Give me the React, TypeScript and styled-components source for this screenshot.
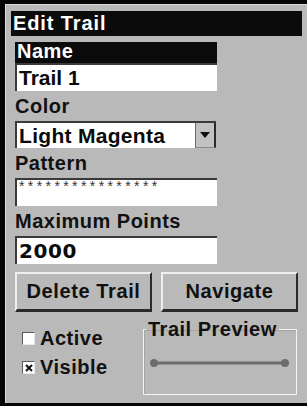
import React from "react";
import styled, { createGlobalStyle } from "styled-components";

const Global = createGlobalStyle`
  html, body { margin: 0; padding: 0; background: #000; }
  body { font-family: "Liberation Sans", Arial, sans-serif; }
`;

const Frame = styled.div`
  width: 307px;
  height: 406px;
  box-sizing: border-box;
  background: #050505;
  padding: 4px 0 3px 5px;
  display: flex;
`;

const Panel = styled.div`
  flex: 1;
  display: flex;
  flex-direction: column;
  background: #b9b9b9;
  border-top: 1px solid #dcdcdc;
  border-left: 1px solid #dcdcdc;
  padding: 6px 5px 0 5px;
  font-family: "Liberation Sans", Arial, sans-serif;
  font-weight: bold;
  font-size: 20px;
  letter-spacing: 0.5px;
  color: #111;
`;

const TitleBar = styled.div`
  height: 25px;
  line-height: 24px;
  background: #0b0b0b;
  color: #fff;
  padding-left: 2px;
  letter-spacing: 0.9px;
`;

const Body = styled.div`
  display: flex;
  flex-direction: column;
  padding: 6px 4px 0 4px;
  flex: 1;
`;

const FieldColumn = styled.div`
  width: 202px;
  display: flex;
  flex-direction: column;
`;

const SectionHeader = styled.div`
  height: 21px;
  line-height: 18px;
  background: #0b0b0b;
  color: #fff;
  padding-left: 2px;
`;

const Label = styled.div`
  height: 30px;
  line-height: 31px;
`;

const TextBox = styled.div<{ $digits?: boolean }>`
  height: 28px;
  box-sizing: border-box;
  background: #fff;
  border-top: 2px solid #3a3a3a;
  border-left: 2px solid #3a3a3a;
  padding-left: 2px;
  line-height: 26px;
  font-size: ${(p) => (p.$digits ? "20px" : "21px")};
  font-family: ${(p) =>
    p.$digits ? '"DejaVu Sans", sans-serif' : '"Liberation Sans", Arial, sans-serif'};
  letter-spacing: ${(p) => (p.$digits ? "0.6px" : "0")};
  color: #0a0a0a;
`;

const PatternBox = styled.div`
  height: 28px;
  box-sizing: border-box;
  background: #fff;
  border-top: 2px solid #3a3a3a;
  border-left: 2px solid #3a3a3a;
  padding-left: 2px;
  font-family: "Liberation Sans", Arial, sans-serif;
  font-weight: normal;
  font-size: 14px;
  line-height: 13px;
  letter-spacing: 3.4px;
  color: #333;
`;

const Select = styled.div`
  height: 27px;
  box-sizing: border-box;
  display: flex;
  background: #fff;
  border-top: 2px solid #3a3a3a;
  border-left: 2px solid #3a3a3a;
  margin-right: 1px;
`;

const SelectValue = styled.div`
  flex: 1;
  padding-left: 2px;
  line-height: 25px;
  font-size: 21px;
  letter-spacing: 0.3px;
  color: #0a0a0a;
  white-space: nowrap;
  overflow: hidden;
`;

const SelectButton = styled.div`
  width: 18px;
  background: #c2c2c2;
  border-left: 1px solid #6a6a6a;
  border-right: 2px solid #2a2a2a;
  border-bottom: 1px solid #8a8a8a;
  display: flex;
  align-items: center;
  justify-content: center;
`;

const ButtonRow = styled.div`
  display: flex;
  gap: 9px;
  margin-top: 8px;
`;

const Button = styled.button`
  flex: 1;
  height: 40px;
  box-sizing: border-box;
  padding: 0;
  background: #b9b9b9;
  border-top: 2px solid #efefef;
  border-left: 2px solid #efefef;
  border-right: 2px solid #2a2a2a;
  border-bottom: 3px solid #2a2a2a;
  font-family: "Liberation Sans", Arial, sans-serif;
  font-weight: bold;
  font-size: 20px;
  letter-spacing: 0.6px;
  color: #111;
`;

const BottomRow = styled.div`
  display: flex;
  align-items: flex-start;
`;

const CheckColumn = styled.div`
  display: flex;
  flex-direction: column;
  margin-left: 7px;
  padding-top: 12px;
`;

const CheckRow = styled.div`
  height: 29px;
  display: flex;
  align-items: center;
  gap: 5px;
`;

const CheckBox = styled.div`
  width: 13px;
  height: 13px;
  box-sizing: border-box;
  background: #fff;
  border-top: 1px solid #5a5a5a;
  border-left: 1px solid #5a5a5a;
  border-right: 1px solid #e8e8e8;
  border-bottom: 1px solid #e8e8e8;
  display: flex;
  align-items: center;
  justify-content: center;
`;

const PreviewGroup = styled.fieldset`
  margin: 7px 1px 0 auto;
  width: 154px;
  height: 76px;
  box-sizing: border-box;
  padding: 0;
  border: 1px solid #f4f4f4;
  box-shadow: inset 1px 1px 0 #a4a4a4;
`;

const PreviewLegend = styled.legend`
  margin-left: 2px;
  padding: 0 2px;
  line-height: 20px;
  font-size: 20px;
`;

const PreviewLine = styled.svg`
  display: block;
  margin: 19px 0 0 6px;
`;

export default function App() {
  return (
    <>
      <Global />
      <Frame>
        <Panel>
          <TitleBar>Edit Trail</TitleBar>
          <Body>
            <FieldColumn>
              <SectionHeader>Name</SectionHeader>
              <TextBox>Trail 1</TextBox>
              <Label>Color</Label>
              <Select>
                <SelectValue>Light Magenta</SelectValue>
                <SelectButton>
                  <svg width="10" height="6" viewBox="0 0 10 6">
                    <polygon points="0,0 10,0 5,6" fill="#111" />
                  </svg>
                </SelectButton>
              </Select>
              <Label>Pattern</Label>
              <PatternBox>****************</PatternBox>
              <Label>Maximum Points</Label>
              <TextBox $digits>2000</TextBox>
            </FieldColumn>
            <ButtonRow>
              <Button>Delete Trail</Button>
              <Button>Navigate</Button>
            </ButtonRow>
            <BottomRow>
              <CheckColumn>
                <CheckRow>
                  <CheckBox />
                  Active
                </CheckRow>
                <CheckRow>
                  <CheckBox>
                    <svg width="8" height="8" viewBox="0 0 8 8">
                      <path d="M1 1 L7 7 M7 1 L1 7" stroke="#111" strokeWidth="2" />
                    </svg>
                  </CheckBox>
                  Visible
                </CheckRow>
              </CheckColumn>
              <PreviewGroup>
                <PreviewLegend>Trail Preview</PreviewLegend>
                <PreviewLine width="140" height="10" viewBox="0 0 140 10">
                  <line x1="4" y1="5" x2="135" y2="5" stroke="#6c6c6c" strokeWidth="3" />
                  <circle cx="4" cy="5" r="4" fill="#6c6c6c" />
                  <circle cx="135" cy="5" r="4" fill="#6c6c6c" />
                </PreviewLine>
              </PreviewGroup>
            </BottomRow>
          </Body>
        </Panel>
      </Frame>
    </>
  );
}
